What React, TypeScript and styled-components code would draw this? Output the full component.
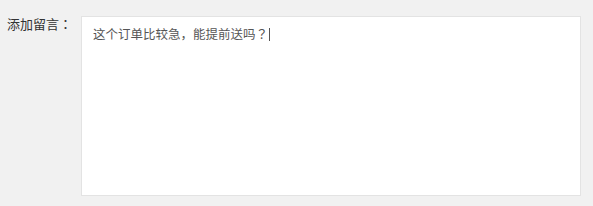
import React from "react";
import styled, { createGlobalStyle } from "styled-components";

const Global = createGlobalStyle`
  html, body { margin: 0; padding: 0; background: #f1f1f1; }
  body { font-family: "Noto Sans CJK SC", "Microsoft YaHei", sans-serif; }
`;

const Row = styled.div`
  display: flex;
  align-items: flex-start;
  padding: 16px 0 0 7px;
`;

const Label = styled.label`
  width: 74px;
  flex: none;
  font-size: 13px;
  line-height: 14px;
  color: #333;
  padding-top: 1px;
`;

const Punct = styled.span`
  font-family: "Noto Sans CJK JP", sans-serif;
`;

const Box = styled.div`
  box-sizing: border-box;
  width: 500px;
  height: 180px;
  background: #fff;
  border: 1px solid #e3e3e3;
  padding: 10px 11px;
  font-size: 12.5px;
  line-height: 14px;
  color: #555;
`;

const Caret = styled.span`
  display: inline-block;
  width: 1px;
  height: 13px;
  background: #555;
  vertical-align: -2px;
  margin-left: 1px;
`;

export default function App() {
  return (
    <>
      <Global />
      <Row>
        <Label>
          添加留言<Punct>：</Punct>
        </Label>
        <Box>
          这个订单比较急，能提前送吗<Punct>？</Punct>
          <Caret />
        </Box>
      </Row>
    </>
  );
}
